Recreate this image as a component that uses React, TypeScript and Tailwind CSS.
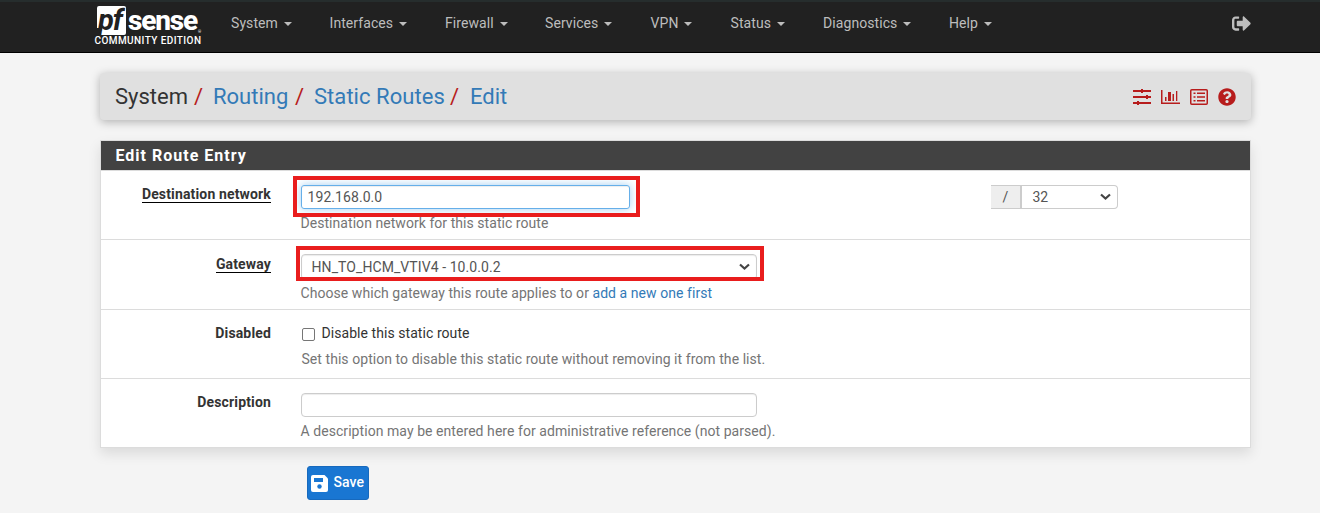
import type { ReactNode } from 'react';
import { FaSignOutAlt } from 'react-icons/fa';

const menus = [
  { label: 'System', width: 'w-[98.5px]' },
  { label: 'Interfaces', width: 'w-[115.5px]' },
  { label: 'Firewall', width: 'w-[100px]' },
  { label: 'Services', width: 'w-[105.5px]' },
  { label: 'VPN', width: 'w-[80px]' },
  { label: 'Status', width: 'w-[92.5px]' },
  { label: 'Diagnostics', width: 'w-[126px]' },
  { label: 'Help', width: 'w-[80px]' },
];

function Logo() {
  return (
    <div className="ml-[94px] mt-[4px] h-[44px] w-[137px] shrink-0 text-white">
      <div className="ml-[3px] flex h-[29px]">
        <div className="relative h-[29px] w-[29px]">
          <svg width="29" height="29" viewBox="0 0 29 29" className="absolute inset-0">
            <path d="M2 0h25q2 0 2 2v25q0 2-2 2H3l2-7H0V2q0-2 2-2z" fill="#fff" />
          </svg>
          <span className="absolute top-0 left-[1px] text-[29px] leading-[29px] font-bold italic tracking-[-1px] text-[#212121]">pf</span>
        </div>
        <span className="ml-[2px] mt-px w-[70px] text-[28px] leading-[27px] font-extrabold tracking-[-1.200px]">sense</span>
        <span className="mt-[24px] text-[4px] leading-[4px]">®</span>
      </div>
      <div className="ml-[0.500px] whitespace-nowrap text-[10px] leading-[12px] font-medium tracking-[0.420px]">COMMUNITY EDITION</div>
    </div>
  );
}

function Chevron() {
  return (
    <svg width="11" height="8" viewBox="0 0 11 8" fill="none" stroke="#444" strokeWidth="2.200" className="shrink-0">
      <path d="M1 1.500 5.500 5.500 10 1.500" />
    </svg>
  );
}

function HeaderIcons() {
  return (
    <div className="flex h-[18px] items-center">
      <svg width="18" height="18" viewBox="0 0 18 18" fill="#b71c1c">
        <path d="M0 2h18v2H0zM0 8h18v2H0zM0 14h18v2H0zM8 1h2v4H8zM13 7h2v4h-2zM4 13h2v4H4z" />
      </svg>
      <svg width="19" height="18" viewBox="0 0 19 18" fill="#b71c1c" className="ml-[10px]">
        <path d="M0 2h1.500v12.500H19V16H0zM4 9h1.500v4H4zM7 4h3v9H7zM11.500 6h1.500v7h-1.500zM15 3h1.300v10H15z" />
      </svg>
      <svg width="18" height="18" viewBox="0 0 18 18" fill="#b71c1c" className="ml-[10px]">
        <rect x=".75" y="1.750" width="16.500" height="14.500" rx="1" fill="none" stroke="#b71c1c" strokeWidth="1.500" />
        <path d="M3.500 4.500h2V6h-2zM3.500 8.300h2v1.500h-2zM3.500 12h2v1.500h-2zM7 4.500h8V6H7zM7 8.300h8v1.500H7zM7 12h8v1.500H7z" />
      </svg>
      <svg width="18" height="18" viewBox="0 0 512 512" fill="#b71c1c" className="ml-[10px]">
        <path d="M504 256c0 137-111 248-248 248S8 393 8 256 119 8 256 8s248 111 248 248zM262.700 90c-54.500 0-89.300 23-116.500 63.800-3.500 5.300-2.400 12.400 2.700 16.300l34.700 26.300c5.200 3.900 12.600 3 16.700-2.100 17.900-22.700 30.100-35.800 57.300-35.800 20.400 0 45.700 13.100 45.700 33 0 15-12.400 22.700-32.500 34C247.100 238.500 216 255 216 296v4c0 6.600 5.400 12 12 12h56c6.600 0 12-5.400 12-12v-1.300c0-28.800 84-30 84-107.700 0-58.600-60.700-101-117.300-101zM256 338c-25.400 0-46 20.600-46 46s20.600 46 46 46 46-20.600 46-46-20.600-46-46-46z" />
      </svg>
    </div>
  );
}

function Row({ label, required, height, labelPad = 'pt-[13px]', children }: { label: string; required?: boolean; height: string; labelPad?: string; children: ReactNode }) {
  return (
    <div className={`flex border-b border-[#dcdcdc] ${height}`}>
      <div className={`flex w-[170px] shrink-0 justify-end ${labelPad}`}>
        <span className={`h-[19px] whitespace-nowrap text-[14px] leading-[20px] font-bold tracking-[0.150px] text-[#333] ${required ? 'border-b border-black' : ''}`}>{label}</span>
      </div>
      <div className="relative ml-[30px] grow pt-[14px]">{children}</div>
    </div>
  );
}

export default function App() {
  return (
    <div className="h-[513px] overflow-hidden bg-[#f4f4f4] font-[Roboto,sans-serif] text-[14px] text-[#333]">
      <header className="flex h-[53px] border-t-2 border-b border-t-[#262d2d] border-b-black bg-[#212121]">
        <Logo />
        <nav className="flex h-[42px] items-center text-[14px] text-[#bdbdbd]">
          {menus.map((m) => (
            <a key={m.label} className={`flex shrink-0 items-center gap-[6px] tracking-[0.080px] ${m.width}`}>
              {m.label}
              <span className="mt-[2px] border-x-4 border-t-4 border-x-transparent border-t-[#bdbdbd]" />
            </a>
          ))}
        </nav>
        <FaSignOutAlt className="mt-[12px] ml-auto mr-[69px] h-[19px] w-[19px] text-[#bdbdbd]" />
      </header>

      <main className="ml-[100px] w-[1151px]">
        <div className="mt-[20px] flex h-[47px] items-center justify-between rounded-[4px] bg-[#e0e0e0] pr-[15.500px] pl-[15px] shadow-[0_2px_10px_rgba(0,0,0,0.28)]">
          <h1 className="flex text-[22px] leading-[30px]">
            <span className="w-[79px]">System</span>
            <span className="w-[19px] text-[#b71c1c]">/</span>
            <a className="w-[82px] text-[#337ab7]">Routing</a>
            <span className="w-[19px] text-[#b71c1c]">/</span>
            <a className="w-[136px] whitespace-nowrap tracking-[0.050px] text-[#337ab7]">Static Routes</a>
            <span className="w-[20px] text-[#b71c1c]">/</span>
            <a className="text-[#337ab7]">Edit</a>
          </h1>
          <HeaderIcons />
        </div>

        <section className="mt-[20px] border border-b-0 border-[#dcdcdc] bg-white shadow-[0_6px_12px_rgba(0,0,0,0.1)]">
          <h2 className="h-[29px] bg-[#424242] pl-[14.500px] text-[16px] leading-[29px] font-bold tracking-[1px] text-white">Edit Route Entry</h2>

          <Row label="Destination network" required height="h-[70px] border-t">
            <div className="flex h-[24px]">
              <div className="w-[329px] rounded-[3px] border border-[#66afe9] pl-[5.500px] leading-[23px] tracking-[0.070px] text-[#555] shadow-[inset_0_1px_1px_rgba(0,0,0,0.07),0_0_8px_rgba(102,175,233,0.6)]">192.168.0.0</div>
              <div className="ml-[361px] w-[29px] border-y border-[#ccc] bg-[#eee] text-center leading-[23px] text-[#555]">/</div>
              <div className="flex w-[98px] items-center justify-between rounded-r-[4px] border border-l-2 border-[#ccc] pr-[6px] pl-[10.500px] leading-[23px] text-[#555]">32<Chevron /></div>
            </div>
            <p className="mt-[4px] -ml-[0.500px] leading-[20px] tracking-[0.050px] text-[#757575]">Destination network for this static route</p>
            <div className="absolute top-[5px] left-[-8px] h-[41px] w-[347px] border-[4px] border-[#e91d1d]" />
          </Row>

          <Row label="Gateway" required height="h-[70px]" labelPad="pt-[14px]">
            <div className="flex h-[26px] w-[456px] items-center justify-between rounded-[4px] border border-[#ccc] pr-[6px] pl-[9.500px] tracking-[0.080px] text-[#555] shadow-[inset_0_1px_1px_rgba(0,0,0,0.08)]">HN_TO_HCM_VTIV4 - 10.0.0.2<Chevron /></div>
            <p className="mt-[3px] -ml-[0.500px] leading-[20px] tracking-[0.060px] text-[#757575]">Choose which gateway this route applies to or <a className="text-[#337ab7]">add a new one first</a></p>
            <div className="absolute top-[6px] left-[-5px] h-[35px] w-[468px] border-[4px] border-[#e91d1d]" />
          </Row>

          <Row label="Disabled" height="h-[69px]">
            <div className="-mt-px flex h-[20px] items-center leading-[20px] tracking-[0.060px]">
              <span className="mt-[3px] mr-[6.500px] ml-[1px] h-[13px] w-[13px] rounded-[2px] border border-[#767676]" />
              Disable this static route
            </div>
            <p className="mt-[6px] ml-[0.500px] leading-[20px] tracking-[0.055px] text-[#757575]">Set this option to disable this static route without removing it from the list.</p>
          </Row>

          <Row label="Description" height="h-[69px]">
            <div className="h-[24px] w-[456px] rounded-[4px] border border-[#ccc] shadow-[inset_0_1px_1px_rgba(0,0,0,0.075)]" />
            <p className="mt-[4px] -ml-[0.500px] leading-[20px] tracking-[0.060px] text-[#757575]">A description may be entered here for administrative reference (not parsed).</p>
          </Row>
        </section>

        <button className="mt-[18px] ml-[207px] flex h-[34px] w-[62px] items-center rounded-[3px] border border-[#1769bd] bg-[#1976d2] pl-[3px] font-medium text-white">
          <svg width="17" height="17" viewBox="0 0 17 17">
            <path d="M2 0h11.500L17 3.500V15q0 2-2 2H2q-2 0-2-2V2Q0 0 2 0z" fill="#fff" />
            <path d="M3 3h9v4H3z" fill="#1976d2" />
            <circle cx="8.500" cy="11.500" r="2.200" fill="#1976d2" />
          </svg>
          <span className="ml-[5.500px] -mt-[2px] tracking-[0.100px]">Save</span>
        </button>
      </main>
    </div>
  );
}
